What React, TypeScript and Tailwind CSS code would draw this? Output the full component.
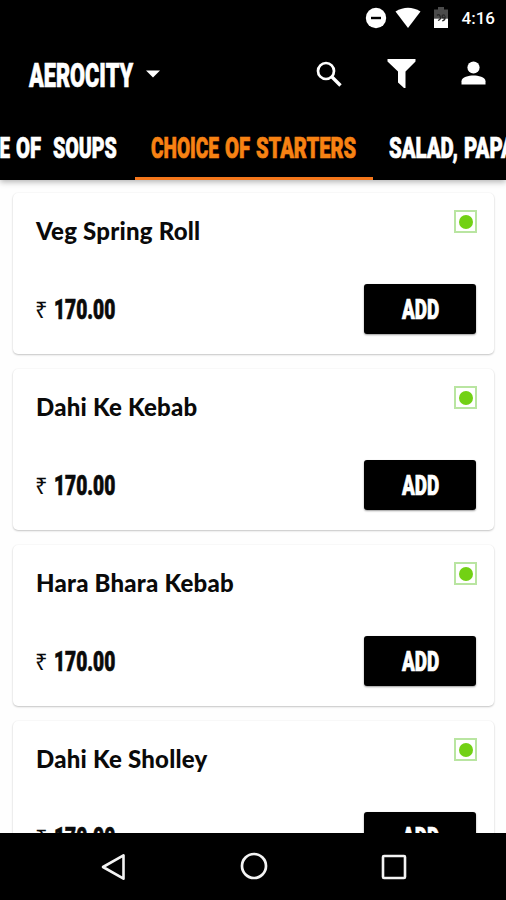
import { useLayoutEffect, useRef, useState } from "react";

type DisplayProps = { text: string; width: number; className?: string };

// Poster-style lettering, squeezed horizontally to the requested width.
function Display({ text, width, className = "" }: DisplayProps) {
  const ref = useRef<HTMLSpanElement>(null);
  const [scale, setScale] = useState(1);
  useLayoutEffect(() => {
    if (ref.current) setScale(width / ref.current.offsetWidth);
  }, [text, width]);
  return (
    <span className="block shrink-0" style={{ width }}>
      <span
        ref={ref}
        className={`block w-max origin-left whitespace-pre font-['Roboto','Liberation_Sans',sans-serif] font-black [-webkit-text-stroke:0.7px_currentColor] ${className}`}
        style={{ transform: `scaleX(${scale})` }}
      >
        {text}
      </span>
    </span>
  );
}

function StatusBar() {
  return (
    <div className="flex h-9 items-center justify-end pr-[11px] text-white">
      <svg width="22" height="22" viewBox="0 0 22 22" className="mr-[8px]">
        <circle cx="11" cy="11" r="10.2" fill="#fff" />
        <path d="M6 11h10" stroke="#000" strokeWidth="2.4" />
      </svg>
      <svg width="26" height="22" viewBox="0 0 26 22" className="mr-[12px]">
        <path d="M.5 4.500Q13-3 25.500 4.500L13 21z" fill="#fff" />
      </svg>
      <svg width="16" height="22" viewBox="0 0 16 22" className="mr-[13px]">
        <path d="M5 0h6v2.500h4V11H1V2.500h4z" fill="#4b4b4b" />
        <path d="M1 11.500h14V21H1z" fill="#fff" />
        <path d="M4 8.500q1.800-2 3.200.8t-2.200 4.200M12 8.500q-3-1.500-2.800 1t2.800.5q.5 3-2.800 4" fill="none" stroke="#282828" strokeWidth="1.300" />
      </svg>
      <span className="font-['Roboto',sans-serif] text-[17px] leading-5 font-medium">4:16</span>
    </div>
  );
}

function Toolbar() {
  return (
    <div className="flex h-[77px] items-center pl-[29px] text-white">
      <Display text="AEROCITY" width={104} className="pt-[2px] text-[33px] leading-9" />
      <svg width="14" height="8" viewBox="0 0 14 8" className="ml-[13px] -mt-[2px]">
        <path d="M0 .5h14L7 7.500z" fill="#fff" />
      </svg>
      <svg width="26" height="26" viewBox="0 0 26 26" className="ml-[156px] -mt-[2px]" fill="none" stroke="#fff">
        <circle cx="10" cy="10" r="8" strokeWidth="2.700" />
        <path d="M16 16l8.500 8.500" strokeWidth="3.400" />
      </svg>
      <svg width="29" height="31" viewBox="0 0 29 31" className="ml-[45px] -mt-[2px]">
        <path d="M.5 1h28v2.500L18.500 13.500V30h-1.500l-6-5.500V13.500L.5 3.500z" fill="#fff" />
      </svg>
      <svg width="25" height="24" viewBox="0 0 25 24" className="ml-[45px] -mt-[3px]" fill="#fff">
        <circle cx="12.500" cy="6.500" r="6.100" />
        <path d="M.5 23.500v-3.200C.5 16 8 14.500 12.500 14.500s12 1.500 12 5.800v3.200z" />
      </svg>
    </div>
  );
}

function Tabs() {
  const label = "text-[30px] leading-8";
  return (
    <nav className="flex h-[67px] overflow-hidden text-white">
      <div className="-ml-[75px] flex w-[210px] shrink-0 pt-[19px] pl-[18px]">
        <Display text="CHOICE" width={67} className={label} />
        <div className="ml-[6px]">
          <Display text="OF" width={25} className={label} />
        </div>
        <div className="ml-[12px]">
          <Display text="SOUPS" width={64} className={label} />
        </div>
      </div>
      <div className="flex w-[238px] shrink-0 gap-[6px] border-b-[3px] border-[#f5771b] pt-[19px] pl-[16px] text-[#f78213]">
        <Display text="CHOICE" width={68} className={label} />
        <Display text="OF" width={25} className={label} />
        <Display text="STARTERS" width={100} className={label} />
      </div>
      <div className="flex shrink-0 gap-[6px] pt-[19px] pl-[16px]">
        <Display text="SALAD," width={69} className={label} />
        <Display text="PAPAD" width={64} className={label} />
      </div>
    </nav>
  );
}

function DishCard({ name }: { name: string }) {
  return (
    <article className="flex h-[161px] shrink-0 flex-col rounded-[5px] bg-white pr-[17px] pl-[23px] shadow-[0_1px_2px_rgba(0,0,0,0.22),0_0_2px_rgba(0,0,0,0.05)]">
      <div className="flex h-[91px] items-start justify-between">
        <h2 className="pt-[24px] font-['Lato',sans-serif] text-[24px] leading-7 font-black tracking-[0.22px] text-[#0a0a0a]">{name}</h2>
        <div className="mt-[17px] flex size-[23px] items-center justify-center border-2 border-[#b9e5a1]">
          <div className="size-[14px] rounded-full bg-[#72d114]" />
        </div>
      </div>
      <div className="flex items-center justify-between pr-px">
        <div className="flex items-center text-[#0a0a0a]">
          <span className="-ml-px w-[19px] font-['Noto_Sans',sans-serif] text-[22px] leading-8">₹</span>
          <Display text="170.00" width={61} className="pt-[2px] text-[27px] leading-8" />
        </div>
        <button className="flex h-[50px] w-[112px] items-center justify-center rounded-[3px] bg-black text-white shadow-[0_1px_2px_rgba(0,0,0,0.4)]">
          <Display text="ADD" width={37} className="pt-[2px] text-[27px] leading-8" />
        </button>
      </div>
    </article>
  );
}

function NavBar() {
  return (
    <footer className="z-10 flex h-[67px] shrink-0 items-center bg-black pl-[101px]">
      <svg width="25" height="28" viewBox="0 0 25 28" fill="none" stroke="#f3f3f3" strokeWidth="2.600" strokeLinejoin="round">
        <path d="M2 14L22.500 2.300v23.400z" />
      </svg>
      <svg width="28" height="28" viewBox="0 0 28 28" className="ml-[114px] -mt-px" fill="none" stroke="#f3f3f3" strokeWidth="2.700">
        <circle cx="14" cy="14" r="12" />
      </svg>
      <svg width="26" height="26" viewBox="0 0 26 26" className="ml-[113px]" fill="none" stroke="#f3f3f3" strokeWidth="2.600">
        <rect x="2" y="2" width="22" height="22" rx="1" />
      </svg>
    </footer>
  );
}

const dishes = ["Veg Spring Roll", "Dahi Ke Kebab", "Hara Bhara Kebab", "Dahi Ke Sholley"];

export default function App() {
  return (
    <div className="flex h-[900px] w-[506px] flex-col overflow-hidden bg-[#fefefe]">
      <header className="z-10 h-[180px] shrink-0 bg-black shadow-[0_2px_6px_rgba(0,0,0,0.3)]">
        <StatusBar />
        <Toolbar />
        <Tabs />
      </header>
      <main className="flex min-h-0 flex-1 flex-col gap-[15px] overflow-hidden pt-[13px] pr-[12px] pl-[13px]">
        {dishes.map((name) => (
          <DishCard key={name} name={name} />
        ))}
      </main>
      <NavBar />
    </div>
  );
}
